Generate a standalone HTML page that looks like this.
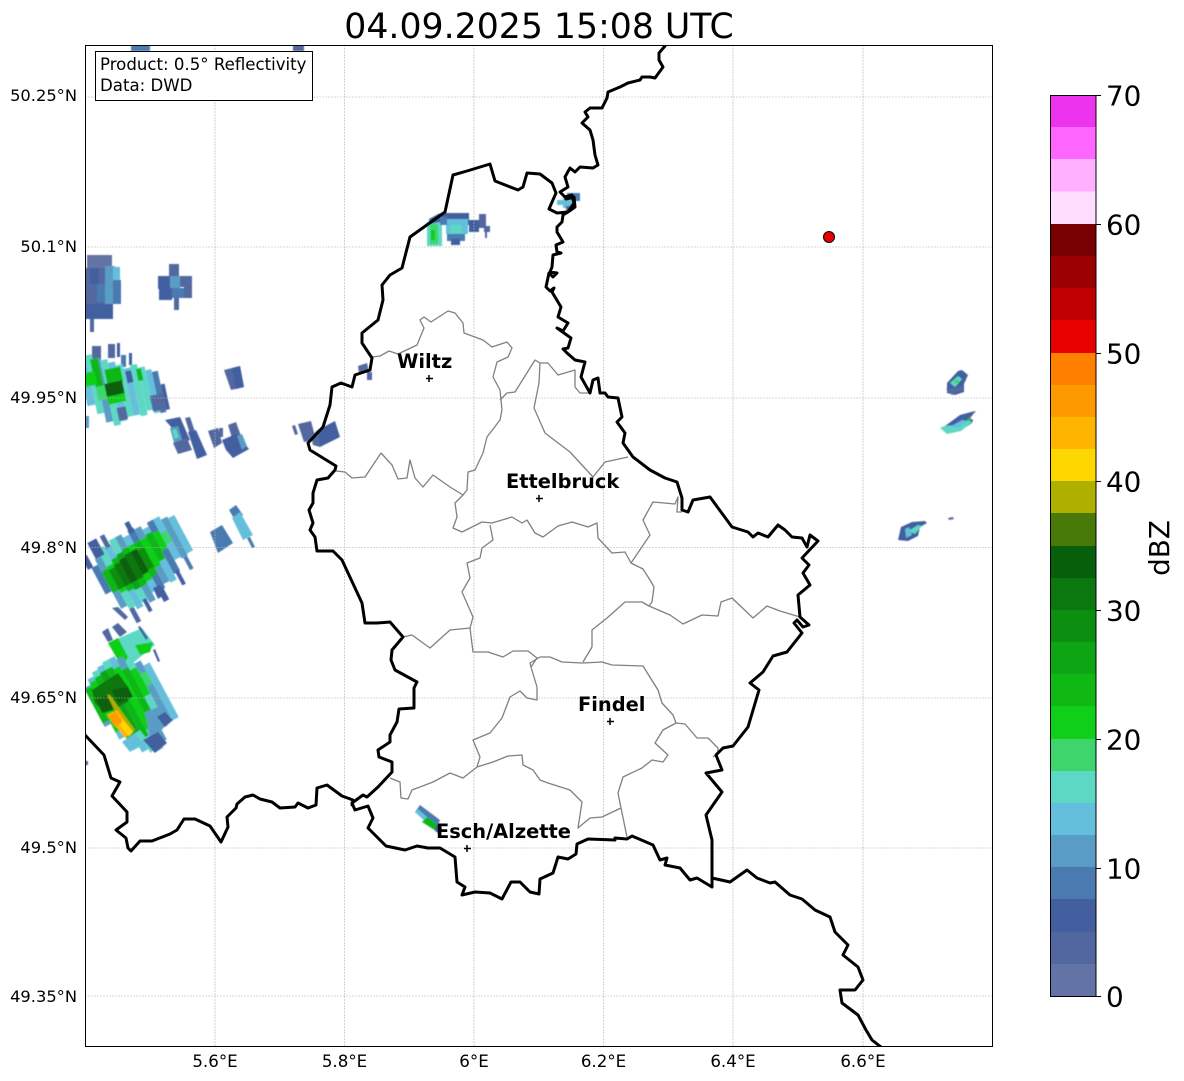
<!DOCTYPE html>
<html><head><meta charset="utf-8"><style>
html,body{margin:0;padding:0;background:#fff;width:1184px;height:1081px;overflow:hidden}
svg{display:block}
text{font-family:"DejaVu Sans","Liberation Sans",sans-serif;fill:#000}
.g{stroke:#b4b4b4;stroke-width:.6;stroke-dasharray:2 1;fill:none}
.b{fill:none;stroke:#000;stroke-width:3;stroke-linejoin:round;stroke-linecap:round}
.r{fill:none;stroke:#808080;stroke-width:1.3;stroke-linejoin:round}
.lat{font-size:16.3px;text-anchor:end}
.lon{font-size:16.67px;text-anchor:middle}
.cb{font-size:27.8px}
.city{font-size:19.4px;font-weight:bold}
.c0{fill:#6373a6}.c1{fill:#52679f}.c2{fill:#435fa0}.c3{fill:#4a7ab0}.c4{fill:#5a9dc4}.c5{fill:#63bfdc}.c6{fill:#5dd8c4}.c7{fill:#3ed66c}.c8{fill:#10cf18}.c9{fill:#10b814}.c10{fill:#0ea514}.c11{fill:#0c8f10}.c12{fill:#0a780e}.c13{fill:#075f0b}
</style></head><body>
<svg width="1184" height="1081" viewBox="0 0 1184 1081" xmlns="http://www.w3.org/2000/svg">
<defs>
<clipPath id="ax"><rect x="85" y="45" width="907" height="1001"/></clipPath>
<filter id="s" x="-5%" y="-5%" width="110%" height="110%"><feGaussianBlur stdDeviation=".4"/></filter>
</defs>
<text x="539" y="38" font-size="34.7" text-anchor="middle">04.09.2025 15:08 UTC</text>
<rect x="85" y="45" width="907" height="1001" fill="#fff"/>
<g clip-path="url(#ax)">
<g filter="url(#s)">
<!-- top edge -->
<rect x="131" y="45" width="19" height="6" class="c3"/><rect x="293" y="45" width="11" height="6" class="c1"/>
<rect x="85" y="761" width="3" height="4" class="c1"/>
<!-- A -->
<rect x="87" y="255" width="25" height="15" class="c0"/><rect x="85" y="268" width="24" height="36" class="c1"/><rect x="90" y="268" width="9" height="16" class="c2"/><rect x="97" y="284" width="9" height="18" class="c3"/><rect x="105" y="266" width="10" height="38" class="c4"/><rect x="113" y="267" width="7" height="13" class="c5"/><rect x="113" y="280" width="8" height="24" class="c3"/><rect x="85" y="304" width="28" height="15" class="c2"/><rect x="90" y="319" width="4" height="13" class="c1"/>
<!-- B -->
<rect x="169" y="264" width="10" height="12" class="c1"/><rect x="158" y="276" width="12" height="13" class="c2"/><rect x="170" y="276" width="10" height="13" class="c4"/><rect x="180" y="276" width="12" height="11" class="c1"/><rect x="159" y="288" width="13" height="12" class="c2"/><rect x="172" y="288" width="12" height="10" class="c3"/><rect x="184" y="286" width="8" height="12" class="c1"/><rect x="174" y="298" width="5" height="12" class="c1"/>
<!-- C -->
<rect x="92" y="346" width="9" height="14" class="c1"/><rect x="108" y="344" width="7" height="14" class="c1"/><rect x="117" y="343" width="3" height="14" class="c2"/><rect x="121" y="355" width="5" height="12" class="c3"/><rect x="129" y="353" width="3" height="12" class="c2"/>
<g transform="rotate(-12 125 390)">
<rect x="85" y="350" width="8" height="48" class="c5"/><rect x="93" y="348" width="7" height="60" class="c6"/><rect x="100" y="353" width="7" height="65" class="c4"/><rect x="107" y="356" width="7" height="67" class="c6"/><rect x="114" y="360" width="7" height="60" class="c5"/><rect x="121" y="364" width="7" height="53" class="c6"/><rect x="128" y="369" width="7" height="48" class="c5"/><rect x="135" y="367" width="7" height="52" class="c6"/><rect x="142" y="371" width="7" height="44" class="c6"/><rect x="149" y="375" width="6" height="44" class="c5"/><rect x="155" y="378" width="6" height="42" class="c3"/><rect x="161" y="392" width="4" height="26" class="c2"/>
<rect x="97" y="353" width="8" height="30" class="c9"/><rect x="140" y="372" width="5" height="12" class="c9"/>
<rect x="85" y="365" width="14" height="14" class="c8"/><rect x="97" y="381" width="10" height="14" class="c7"/>
<rect x="109" y="366" width="16" height="15" class="c9"/><rect x="106" y="380" width="18" height="13" class="c13"/><rect x="106" y="393" width="18" height="8" class="c8"/>
<rect x="129" y="372" width="6" height="12" class="c2"/><rect x="113" y="406" width="9" height="13" class="c1"/><rect x="148" y="401" width="14" height="16" class="c1"/>
</g>
<rect x="85" y="416" width="4" height="12" class="c4"/>
<!-- D -->
<polygon class="c2" points="165,420 180,417 190,440 180,444 172,428"/>
<polygon class="c4" points="170,428 178,426 183,442 174,443"/>
<polygon class="c6" points="172,430 176,429 179,437 175,439"/>
<polygon class="c1" points="173,443 187,438 192,450 178,454"/>
<polygon class="c1" points="185,418 190,417 195,432 190,434"/>
<polygon class="c2" points="188,432 196,430 207,455 197,459"/>
<!-- E -->
<polygon class="c1" points="208,431 218,428 222,443 214,448"/>
<rect x="219" y="428" width="4" height="9" class="c1"/>
<polygon class="c1" points="228,425 236,422 241,436 232,438"/>
<polygon class="c2" points="222,440 236,434 249,449 233,458 226,450"/>
<polygon class="c4" points="237,436 242,434 247,446 242,450"/>
<!-- F -->
<polygon class="c1" points="224,370 240,366 244,387 231,390"/>
<polygon class="c2" points="232,368 240,366 244,387 236,389"/>
<!-- G -->
<polygon class="c1" points="298,424 311,421 316,440 304,442"/>
<polygon class="c1" points="292,426 295,425 298,434 295,435"/>
<polygon class="c2" points="316,431 335,421 340,437 320,447"/>
<polygon class="c1" points="311,436 318,430 320,447 313,445"/>
<!-- H stripes -->
<g transform="translate(138 566) rotate(-28)">
<rect x="-42" y="-20" width="7" height="30" class="c3"/><rect x="-35" y="-26" width="7" height="56" class="c4"/><rect x="-28" y="-34" width="7" height="68" class="c6"/><rect x="-21" y="-32" width="7" height="70" class="c5"/><rect x="-14" y="-36" width="7" height="70" class="c6"/><rect x="-7" y="-36" width="7" height="74" class="c4"/><rect x="0" y="-32" width="7" height="62" class="c5"/><rect x="7" y="-36" width="7" height="68" class="c3"/><rect x="14" y="-34" width="7" height="62" class="c4"/><rect x="21" y="-30" width="7" height="60" class="c5"/><rect x="28" y="-34" width="7" height="58" class="c3"/><rect x="35" y="-34" width="7" height="46" class="c5"/><rect x="42" y="-30" width="7" height="44" class="c4"/><rect x="49" y="-28" width="7" height="40" class="c5"/>
<rect x="-46" y="-34" width="6" height="14" class="c2"/><rect x="-34" y="-44" width="10" height="18" class="c2"/><rect x="-20" y="-44" width="5" height="14" class="c1"/><rect x="8" y="-44" width="5" height="12" class="c2"/><rect x="-28" y="34" width="5" height="16" class="c1"/><rect x="-12" y="32" width="4" height="14" class="c2"/><rect x="6" y="30" width="6" height="14" class="c2"/><rect x="30" y="22" width="4" height="16" class="c2"/><rect x="44" y="14" width="4" height="14" class="c3"/>
<rect x="-35" y="-12" width="7" height="24" class="c9"/><rect x="-28" y="-14" width="7" height="30" class="c8"/><rect x="-21" y="-18" width="7" height="36" class="c9"/><rect x="-14" y="-20" width="7" height="40" class="c10"/><rect x="-7" y="-22" width="7" height="42" class="c9"/><rect x="0" y="-22" width="7" height="40" class="c8"/><rect x="7" y="-22" width="7" height="38" class="c9"/><rect x="14" y="-22" width="7" height="32" class="c8"/><rect x="21" y="-24" width="7" height="30" class="c9"/><rect x="28" y="-22" width="7" height="20" class="c8"/><rect x="35" y="-18" width="7" height="12" class="c7"/>
<rect x="-28" y="-10" width="7" height="22" class="c11"/><rect x="-21" y="-12" width="7" height="24" class="c12"/><rect x="-14" y="-14" width="7" height="26" class="c13"/><rect x="-7" y="-16" width="7" height="28" class="c12"/><rect x="0" y="-16" width="7" height="26" class="c13"/><rect x="7" y="-14" width="7" height="22" class="c11"/>
</g>
<polygon class="c2" points="153,588 160,585 164,595 158,599"/>
<polygon class="c1" points="112,608 118,607 128,617 125,620"/>
<polygon class="c3" points="210,532 222,525 233,543 218,553"/>
<polygon class="c3" points="229,510 236,505 243,515 235,520"/>
<polygon class="c5" points="232,518 240,512 253,535 243,540"/>
<polygon class="c3" points="247,538 250,537 255,547 252,548"/>
<!-- I upper -->
<polygon class="c1" points="102,632 108,628 113,640 108,642"/>
<polygon class="c1" points="112,627 118,623 127,632 120,637"/>
<polygon class="c6" points="108,643 142,628 155,645 128,667 122,667"/>
<polygon class="c8" points="108,643 118,638 128,657 122,667"/>
<polygon class="c8" points="135,645 153,642 150,652 140,655"/>
<polygon class="c2" points="138,627 140,626 148,638 146,640"/>
<polygon class="c2" points="153,650 155,649 160,661 158,662"/>
<!-- I lower stripes -->
<g transform="translate(130 700) rotate(-28)">
<rect x="-35" y="-32" width="7" height="44" class="c4"/><rect x="-28" y="-38" width="7" height="68" class="c5"/><rect x="-21" y="-42" width="7" height="88" class="c6"/><rect x="-14" y="-44" width="7" height="96" class="c5"/><rect x="-7" y="-46" width="7" height="102" class="c6"/><rect x="0" y="-46" width="7" height="104" class="c5"/><rect x="7" y="-42" width="7" height="94" class="c4"/><rect x="14" y="-36" width="7" height="76" class="c6"/><rect x="21" y="-30" width="7" height="64" class="c4"/><rect x="28" y="-24" width="7" height="62" class="c5"/>
<rect x="-35" y="-30" width="7" height="38" class="c9"/><rect x="-28" y="-34" width="7" height="56" class="c8"/><rect x="-21" y="-36" width="7" height="72" class="c9"/><rect x="-14" y="-38" width="7" height="78" class="c10"/><rect x="-7" y="-38" width="7" height="78" class="c9"/><rect x="0" y="-35" width="7" height="69" class="c8"/><rect x="7" y="-30" width="7" height="48" class="c9"/><rect x="14" y="-26" width="7" height="30" class="c8"/><rect x="21" y="-18" width="7" height="14" class="c7"/>
</g>
<polygon class="c12" points="92,690 118,673 128,687 128,702 105,713 95,703"/>
<polygon class="c13" points="97,700 108,695 113,710 102,713"/>
<polygon class="c13" points="112,690 128,687 133,697 118,703"/>
<polygon fill="#aeb000" points="107,695 110,695 135,730 128,737"/>
<polygon fill="#ffb400" points="107,715 117,710 133,732 125,738"/>
<polygon fill="#ff9900" points="108,716 116,712 122,722 115,727"/>
<polygon fill="#ffd700" points="123,720 133,732 129,736 120,725"/>
<polygon class="c4" points="145,713 162,705 170,720 160,732 150,738"/>
<polygon class="c2" points="157,717 165,712 173,720 165,727"/>
<polygon class="c2" points="143,740 158,732 167,743 155,753"/>
<polygon class="c5" points="122,742 135,733 143,743 130,752"/>
<polygon class="c6" points="135,733 140,730 146,738 141,742"/>
<!-- top cell -->
<rect x="427" y="222" width="15" height="24" class="c6"/><rect x="430" y="224" width="8" height="20" class="c7"/><rect x="431" y="230" width="4" height="10" class="c8"/>
<polygon class="c2" points="429,219 440,213 440,222 429,224"/>
<rect x="441" y="213" width="28" height="12" class="c2"/><rect x="446" y="219" width="22" height="15" class="c5"/><rect x="450" y="225" width="12" height="8" class="c6"/><rect x="447" y="234" width="18" height="7" class="c3"/><rect x="451" y="239" width="9" height="6" class="c2"/><rect x="469" y="220" width="10" height="12" class="c2"/><rect x="479" y="214" width="7" height="14" class="c1"/><rect x="484" y="226" width="6" height="6" class="c1"/><rect x="485" y="232" width="2" height="6" class="c1"/><rect x="440" y="217" width="7" height="8" class="c3"/>
<!-- loop cell -->
<rect x="567" y="193" width="13" height="8" class="c3"/><rect x="557" y="200" width="14" height="5" class="c5"/><rect x="563" y="197" width="10" height="11" class="c5"/><rect x="566" y="206" width="6" height="5" class="c1"/>
<!-- Wiltz -->
<polygon class="c1" points="358,366 367,363 369,372 359,373"/><rect x="367" y="372" width="5" height="8" class="c1"/>
<!-- Esch -->
<polygon class="c3" points="415,812 420,805 440,820 436,830"/>
<polygon class="c5" points="415,812 418,809 433,822 430,826"/>
<polygon class="c9" points="422,822 427,817 440,826 436,831"/>
<polygon class="c2" points="436,824 442,828 440,834 435,831"/>
<!-- right cells -->
<polygon class="c2" points="947,383 958,371 962,370 968,375 964,384 964,392 955,395 947,393"/>
<polygon class="c6" points="950,383 958,376 962,379 955,387"/>
<polygon class="c7" points="954,381 958,379 959,382 955,384"/>
<polygon class="c1" points="946,389 963,386 963,390 952,395"/>
<polygon class="c2" points="945,426 960,415 971,412 976,411 970,418 973,420 972,423 960,431 948,433"/>
<polygon class="c6" points="940,428 944,426 955,425 968,420 972,422 961,431 947,434"/>
<polygon class="c5" points="950,427 962,420 968,421 958,428"/>
<polygon class="c8" points="968,418 971,419 970,421 967,421"/>
<polygon class="c2" points="901,527 912,522 925,521 927,523 920,527 918,536 908,541 898,540"/>
<polygon class="c6" points="908,531 918,525 922,526 915,534"/>
<polygon class="c5" points="905,529 909,527 912,535 906,538"/>
<polygon class="c1" points="948,518 953,517 954,519 949,520"/>
</g>
<!-- grid -->
<g class="g">
<path d="M215 45V1046M344.500 45V1046M474 45V1046M603.500 45V1046M733 45V1046M863 45V1046"/>
<path d="M85 97H992M85 247H992M85 398H992M85 547.500H992M85 698H992M85 848H992M85 996H992"/>
</g>
<!-- regions -->
<g class="r">
<path d="M372 357L380 356 389 351 398 354 417 345 424 328 420 320 424 317 431 322 448 311 455 313 463 323 464 333 483 340 492 347 507 342 512 348 508 357 497 362 493 377 500 390 502 410 500 420 487 437 483 453 475 470 468 472 467 490 463 495 455 503 457 517 453 528 462 532 482 522 492 523 512 517 522 523 527 520 535 533 543 537 558 526 572 522 588 527 597 523 598 538 612 553 625 552 631 563 643 569 650 580 654 587 652 602 649 606"/>
<path d="M631 563L650 535 643 520 653 502 675 504 678 497 677 512 682 512"/>
<path d="M592 647L592 630 607 618 625 602 642 602 649 606 670 615 683 624 702 615 718 616 721 602 732 598 753 618 767 606 780 611 800 617"/>
<path d="M592 647L583 662"/>
<path d="M531 667L530 663 540 657 550 657 562 662 583 663 602 662 612 665 643 666 658 690 662 703 673 715 676 723 685 724 697 738 708 738 718 748 718 753 713 757"/>
<path d="M676 723L663 730 655 743 668 755 663 762 652 760 642 768 623 777 618 793 621 808 627 837"/>
<path d="M621 808L602 817 590 818 578 828 582 802 570 790 548 783 540 780 533 770 523 765 522 755 508 756 493 762 477 767"/>
<path d="M403 637L412 635 430 648 450 630 470 628 473 617 462 592 470 578 467 563 480 558 482 548 493 540 490 525"/>
<path d="M470 628L473 652 488 652 503 657 513 651 528 651 537 658 531 667 537 687 537 700 527 698 520 691 510 697 502 718 490 733 473 740 480 757 477 767 463 778 450 773 433 782 412 790 408 799 401 798 400 782 390 778"/>
<path d="M500 400L507 393 515 392 535 360 540 363 548 363 558 375 575 370 575 387 580 393 590 393"/>
<path d="M540 363L539 383 534 408 545 433 570 452 593 477 605 462 628 457"/>
<path d="M336 471L345 472 352 478 365 477 381 453 392 465 398 479 407 478 410 460 415 478 423 487 433 475 450 487 463 495"/>
</g>
<!-- borders -->
<g class="b">
<path d="M665 46L659 53 659 60 663 67 655 78 650 77 642 77 640 80 628 83 620 87 608 92 607 98 602 108 590 108 585 112 588 117 582 123 590 130 593 140 595 155 598 165 593 168 580 167 575 172 570 168 565 177 568 187 560 192 565 197 572 195 574 203 568 212 557 213 549 209 556 193 552 183 540 174 527 173 523 187 518 190 495 181 490 164 467 171 453 175 445 212 410 237 402 268 390 275 382 285 383 300 378 320 362 333 362 343 372 358 370 370 355 375 352 387 341 383 332 387 330 405 323 427 308 443 310 450 336 466 335 470 328 478 317 480 313 493 313 503 309 510 313 523 310 530 315 537 317 551 333 551 342 560 362 603 365 623 377 623 390 622 403 637 392 650 391 660 395 670 417 682 414 688 414 708 399 709 397 722 390 735 390 742 378 750 379 757 392 762 392 772 378 787 367 797 363 795 352 803 355 810 368 806 373 818 368 828 386 846 405 850 417 846 428 848 440 848 455 857 457 882 465 887 462 895 475 892 490 893 502 899 511 882 520 882 530 892 539 894 540 879 553 873 558 857 568 859 576 854 577 844 588 839 615 840 615 838 627 839 632 836 653 845 660 860 667 858 665 865 680 868 690 880 697 878 712 887 712 840 706 815 722 792 706 773 722 770 716 755 723 748 733 746 748 727 759 690 750 683 763 672 773 656 787 652 802 633 794 623 797 620 803 627 809 625 800 617 798 595 810 585 803 573 809 565 802 558 818 541 810 535 807 547 802 538 792 537 785 530 778 525 768 537 758 533 753 537 748 532 732 527 710 497 693 500 688 512 682 510 682 498 677 482 665 478 650 470 633 457 623 443 625 433 617 422 622 417 618 398 608 397 605 393 600 393 598 378 593 380 590 393 581 377 585 362 575 360 567 353 563 349 568 348 571 338 557 328 563 331 568 323 558 317 561 307 552 292 554 288 550 291 546 287 549 273 553 277 557 273 550 272 552 267 553 255 561 253 557 252 556 245 563 242 557 232 557 227 562 222 563 215 568 212 575 207 574 197 566 199"/>
<path d="M712 878L730 882 747 870 757 878 770 883 775 882 790 895 802 899 815 910 830 917 835 932 848 945 843 955 858 967 863 980 855 990 840 990 842 1003 858 1015 866 1030 872 1040 881 1047"/>
<path d="M85 735L104 755 111 778 120 782 112 796 127 812 127 822 116 830 126 838 128 848 131 851 140 841 152 841 170 834 177 830 184 819 195 819 210 826 221 842 228 827 227 817 236 808 237 804 245 797 253 795 260 799 272 802 280 808 295 807 298 803 308 808 316 805 317 788 327 785 342 796 353 800 352 805"/>
</g>
<!-- cities -->
<path d="M429 375v7M426 378.500h7M539 495v7M536 498.500h7M610 718v7M607 721.500h7M467 845v7M464 848.500h7" stroke="#000" stroke-width="1.5" fill="none"/>
<text class="city" x="397" y="368">Wiltz</text>
<text class="city" x="506" y="488">Ettelbruck</text>
<text class="city" x="578" y="711">Findel</text>
<text class="city" x="436" y="838">Esch/Alzette</text>
<circle cx="829" cy="237" r="5.500" fill="#e60000" stroke="#000" stroke-width="1"/>
<rect x="95.500" y="51.500" width="217" height="49" fill="#fff" stroke="#000" stroke-width="1"/>
<text x="100" y="70" font-size="16.6">Product: 0.5° Reflectivity</text>
<text x="100" y="91" font-size="16.6">Data: DWD</text>
</g>
<rect x="85.500" y="45.500" width="907" height="1001" fill="none" stroke="#000" stroke-width="1"/>
<!-- lat -->
<text class="lat" x="77" y="101">50.25°N</text>
<text class="lat" x="77" y="252">50.1°N</text>
<text class="lat" x="77" y="403">49.95°N</text>
<text class="lat" x="77" y="553">49.8°N</text>
<text class="lat" x="77" y="703">49.65°N</text>
<text class="lat" x="77" y="853">49.5°N</text>
<text class="lat" x="77" y="1002">49.35°N</text>
<!-- lon -->
<text class="lon" x="215" y="1067">5.6°E</text>
<text class="lon" x="344.500" y="1067">5.8°E</text>
<text class="lon" x="474" y="1067">6°E</text>
<text class="lon" x="603.500" y="1067">6.2°E</text>
<text class="lon" x="733" y="1067">6.4°E</text>
<text class="lon" x="863" y="1067">6.6°E</text>
<!-- colorbar -->
<g>
<rect x="1051" y="95" width="45" height="32.500" fill="#ee33ee"/>
<rect x="1051" y="127" width="45" height="32.500" fill="#ff66ff"/>
<rect x="1051" y="159" width="45" height="32.500" fill="#ffb0ff"/>
<rect x="1051" y="191.500" width="45" height="32.500" fill="#ffddff"/>
<rect x="1051" y="224" width="45" height="32.500" fill="#780000"/>
<rect x="1051" y="256" width="45" height="32.500" fill="#9c0000"/>
<rect x="1051" y="288" width="45" height="32.500" fill="#c00000"/>
<rect x="1051" y="320" width="45" height="33" fill="#e60000"/>
<rect x="1051" y="353" width="45" height="32.500" fill="#ff7f00"/>
<rect x="1051" y="385" width="45" height="32.500" fill="#ff9900"/>
<rect x="1051" y="417" width="45" height="32.500" fill="#ffb400"/>
<rect x="1051" y="449" width="45" height="32.500" fill="#ffd700"/>
<rect x="1051" y="481" width="45" height="32.500" fill="#aeb000"/>
<rect x="1051" y="513" width="45" height="33" fill="#477a09"/>
<rect x="1051" y="546" width="45" height="32.500" fill="#075f0b"/>
<rect x="1051" y="578" width="45" height="32.500" fill="#0a780e"/>
<rect x="1051" y="610" width="45" height="32.500" fill="#0c8f10"/>
<rect x="1051" y="642" width="45" height="32.500" fill="#0ea514"/>
<rect x="1051" y="674" width="45" height="33" fill="#10b814"/>
<rect x="1051" y="706" width="45" height="33" fill="#10cf18"/>
<rect x="1051" y="739" width="45" height="32.500" fill="#3ed66c"/>
<rect x="1051" y="771" width="45" height="32.500" fill="#5dd8c4"/>
<rect x="1051" y="803" width="45" height="32.500" fill="#63bfdc"/>
<rect x="1051" y="835" width="45" height="33" fill="#5a9dc4"/>
<rect x="1051" y="867" width="45" height="33" fill="#4a7ab0"/>
<rect x="1051" y="899" width="45" height="33" fill="#435fa0"/>
<rect x="1051" y="932" width="45" height="32.500" fill="#52679f"/>
<rect x="1051" y="964" width="45" height="32" fill="#6373a6"/>
</g>
<rect x="1050.500" y="95.500" width="45.500" height="901" fill="none" stroke="#000" stroke-width="1"/>
<path d="M1096 95.500h5M1096 224.500h5M1096 353.500h5M1096 481.500h5M1096 610.500h5M1096 739.500h5M1096 868.500h5M1096 996.500h5" stroke="#000" stroke-width="1"/>
<text class="cb" x="1106" y="105.500">70</text>
<text class="cb" x="1106" y="234.500">60</text>
<text class="cb" x="1106" y="363.500">50</text>
<text class="cb" x="1106" y="491.500">40</text>
<text class="cb" x="1106" y="620.500">30</text>
<text class="cb" x="1106" y="749.500">20</text>
<text class="cb" x="1106" y="878.500">10</text>
<text class="cb" x="1106" y="1006.500">0</text>
<text class="cb" transform="translate(1169 548) rotate(-90)" text-anchor="middle">dBZ</text>
</svg>
</body></html>
